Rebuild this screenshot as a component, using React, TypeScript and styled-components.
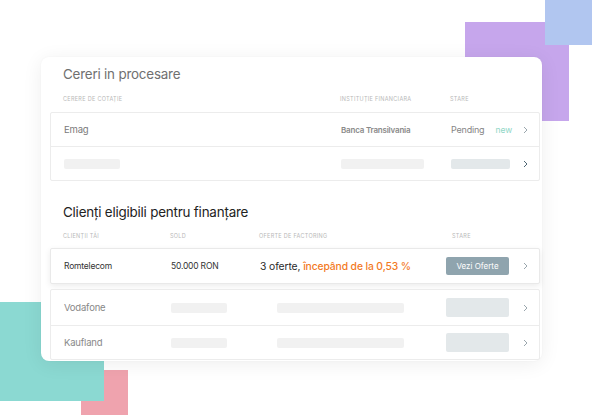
import styled, { createGlobalStyle } from "styled-components";

const GlobalStyle = createGlobalStyle`
  html, body {
    margin: 0;
    padding: 0;
    background: #fff;
  }
  * {
    box-sizing: border-box;
  }
`;

const Page = styled.div`
  position: relative;
  width: 592px;
  height: 415px;
  overflow: hidden;
  padding: 57px 0 0 41px;
  font-family: Inter, "Noto Sans", sans-serif;
  background: #fff;
`;

const Shape = styled.div<{ $x: number; $y: number; $w: number; $h: number; $color: string; $z: number }>`
  position: absolute;
  left: ${(p) => p.$x}px;
  top: ${(p) => p.$y}px;
  width: ${(p) => p.$w}px;
  height: ${(p) => p.$h}px;
  background: ${(p) => p.$color};
  z-index: ${(p) => p.$z};
`;

const Card = styled.div`
  position: relative;
  z-index: 5;
  width: 501px;
  height: 304px;
  background: #fff;
  border-radius: 8px;
  box-shadow: 0 3px 20px rgba(0, 0, 0, 0.07), 0 0 2px rgba(0, 0, 0, 0.04);
  padding: 8px 2px 0 9px;
`;

const Title = styled.h2<{ $dark?: boolean }>`
  margin: ${(p) => (p.$dark ? "22px" : "0")} 0 0 13px;
  font-size: 13.4px;
  line-height: 18px;
  font-weight: 400;
  color: ${(p) => (p.$dark ? "#222" : "#707070")};
  letter-spacing: -0.2px;
`;

const HeadRow = styled.div<{ $cols: string; $top: number }>`
  display: grid;
  grid-template-columns: ${(p) => p.$cols};
  padding-left: 13px;
  margin-top: ${(p) => p.$top}px;
  height: 8px;
  align-items: center;
`;

const HeadLabel = styled.span<{ $shift?: number }>`
  margin-left: ${(p) => p.$shift ?? 0}px;
  font-size: 5.5px;
  line-height: 8px;
  color: #b8b8b8;
  letter-spacing: 0.3px;
  text-transform: uppercase;
  white-space: nowrap;
`;

const Table = styled.div<{ $top: number }>`
  margin-top: ${(p) => p.$top}px;
  border: 1px solid #ececec;
  border-radius: 2px;
  background: #fff;
`;

const Row = styled.div<{ $cols: string; $h: number }>`
  display: grid;
  grid-template-columns: ${(p) => p.$cols};
  align-items: center;
  height: ${(p) => p.$h}px;
  padding-left: 13px;
  & + & {
    border-top: 1px solid #ececec;
  }
`;

const Highlight = styled.div<{ $cols: string }>`
  display: grid;
  grid-template-columns: ${(p) => p.$cols};
  align-items: center;
  height: 36px;
  margin-top: 8px;
  padding-left: 13px;
  background: #fff;
  border: 1px solid #e9e9e9;
  border-radius: 2px;
  box-shadow: 0 2px 6px rgba(0, 0, 0, 0.08);
`;

const Cell = styled.span<{ $size?: number; $color?: string; $weight?: number }>`
  font-size: ${(p) => p.$size ?? 9.5}px;
  color: ${(p) => p.$color ?? "#7a7a7a"};
  font-weight: ${(p) => p.$weight ?? 400};
  letter-spacing: -0.2px;
  white-space: nowrap;
`;

const StatusCell = styled.div`
  display: flex;
  align-items: center;
  gap: 11px;
`;

const NewTag = styled.span`
  font-size: 8.5px;
  color: #8fd6c6;
`;

const Offer = styled.span`
  font-size: 10.3px;
  color: #2a2a2a;
  white-space: nowrap;
  letter-spacing: -0.1px;
`;

const OfferRate = styled.span`
  color: #f37a1f;
  font-weight: 500;
`;

const Skeleton = styled.div<{ $w: number; $h: number; $tone?: "grey" | "blue"; $shift?: number }>`
  width: ${(p) => p.$w}px;
  height: ${(p) => p.$h}px;
  margin-left: ${(p) => p.$shift ?? 0}px;
  background: ${(p) => (p.$tone === "blue" ? "#e3e8ea" : "#f1f1f1")};
  border-radius: 2px;
`;

const Button = styled.button`
  width: 63px;
  height: 18px;
  border: none;
  border-radius: 2px;
  background: #8fa4ae;
  color: #fff;
  font-family: inherit;
  font-size: 8px;
  padding: 0;
  cursor: pointer;
`;

const ChevronWrap = styled.span`
  display: flex;
  align-items: center;
`;

function Chevron({ dark }: { dark?: boolean }) {
  return (
    <ChevronWrap>
      <svg width="5" height="8" viewBox="0 0 5 8">
        <path
          d="M1 1l3 3-3 3"
          fill="none"
          stroke={dark ? "#4f6673" : "#9aa6ad"}
          strokeWidth="1"
        />
      </svg>
    </ChevronWrap>
  );
}

const cols1 = "277px 110px 72px 18px";
const cols2 = "107px 89px 186px 77px 18px";

function App() {
  return (
    <>
      <GlobalStyle />
      <Page>
        <Shape $x={465} $y={22} $w={104} $h={99} $color="#c6a6ec" $z={1} />
        <Shape $x={545} $y={0} $w={47} $h={45} $color="#b1c6f0" $z={2} />
        <Shape $x={81} $y={370} $w={47} $h={45} $color="#efa3ae" $z={1} />
        <Shape $x={0} $y={302} $w={104} $h={99} $color="#8bd9d2" $z={2} />

        <Card>
          <Title>Cereri in procesare</Title>
          <HeadRow $cols={cols1} $top={12}>
            <HeadLabel>Cerere de cotație</HeadLabel>
            <HeadLabel>Instituție financiara</HeadLabel>
            <HeadLabel>Stare</HeadLabel>
          </HeadRow>
          <Table $top={9}>
            <Row $cols={cols1} $h={33}>
              <Cell $size={9.5}>Emag</Cell>
              <Cell $size={8} $weight={600} $color="#8a8a8a">Banca Transilvania</Cell>
              <StatusCell>
                <Cell $size={9} $color="#858585">Pending</Cell>
                <NewTag>new</NewTag>
              </StatusCell>
              <Chevron />
            </Row>
            <Row $cols={cols1} $h={34}>
              <Skeleton $w={56} $h={10} />
              <Skeleton $w={83} $h={10} />
              <Skeleton $w={59} $h={10} $tone="blue" />
              <Chevron dark />
            </Row>
          </Table>

          <Title $dark>Clienți eligibili pentru finanțare</Title>
          <HeadRow $cols={cols2} $top={11}>
            <HeadLabel>Clienții tăi</HeadLabel>
            <HeadLabel>Sold</HeadLabel>
            <HeadLabel>Oferte de factoring</HeadLabel>
            <HeadLabel $shift={7}>Stare</HeadLabel>
          </HeadRow>
          <Highlight $cols={cols2}>
            <Cell $size={8.5} $color="#333">Romtelecom</Cell>
            <Cell $size={8.5} $color="#333">50.000 RON</Cell>
            <Offer>
              3 oferte, <OfferRate>începând de la 0,53 %</OfferRate>
            </Offer>
            <Button>Vezi Oferte</Button>
            <Chevron />
          </Highlight>
          <Table $top={5}>
            <Row $cols={cols2} $h={35}>
              <Cell $size={9.5} $color="#888">Vodafone</Cell>
              <Skeleton $w={56} $h={10} />
              <Skeleton $w={127} $h={10} $shift={17} />
              <Skeleton $w={63} $h={19} $tone="blue" />
              <Chevron />
            </Row>
            <Row $cols={cols2} $h={34}>
              <Cell $size={9.5} $color="#888">Kaufland</Cell>
              <Skeleton $w={56} $h={10} />
              <Skeleton $w={127} $h={10} $shift={17} />
              <Skeleton $w={63} $h={19} $tone="blue" />
              <Chevron />
            </Row>
          </Table>
        </Card>
      </Page>
    </>
  );
}

export default App;
